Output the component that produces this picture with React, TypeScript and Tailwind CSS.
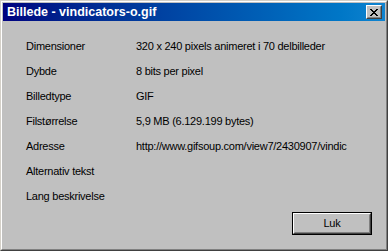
import React from "react";

const rows: [string, string][] = [
  ["Dimensioner", "320 x 240 pixels animeret i 70 delbilleder"],
  ["Dybde", "8 bits per pixel"],
  ["Billedtype", "GIF"],
  ["Filstørrelse", "5,9 MB (6.129.199 bytes)"],
  ["Adresse", "http://www.gifsoup.com/view7/2430907/vindic"],
  ["Alternativ tekst", ""],
  ["Lang beskrivelse", ""],
];

function CloseGlyph() {
  const px: [number, number][] = [];
  const pattern = [
    "XX....XX",
    ".XX..XX.",
    "..XXXX..",
    "...XX...",
    "..XXXX..",
    ".XX..XX.",
    "XX....XX",
  ];
  pattern.forEach((r, y) =>
    r.split("").forEach((c, x) => {
      if (c === "X") px.push([x, y]);
    })
  );
  return (
    <svg width="8" height="7" viewBox="0 0 8 7" shapeRendering="crispEdges">
      {px.map(([x, y]) => (
        <rect key={`${x}-${y}`} x={x} y={y} width="1" height="1" fill="#000" />
      ))}
    </svg>
  );
}

export default function App() {
  return (
    <div
      className="w-[388px] h-[251px] border border-t-[#d4d0c8] border-l-[#d4d0c8] border-b-[#404040] border-r-[#404040] bg-[#c0c0c0]"
      style={{ fontFamily: '"Liberation Sans", Arial, sans-serif' }}
    >
      <div className="w-full h-full border border-t-white border-l-white border-b-[#808080] border-r-[#808080] p-px flex flex-col">
        <div className="h-[18px] flex items-center justify-between bg-gradient-to-r from-[#000080] to-[#1084d0]">
          <span className="pl-[4px] text-white font-bold text-[12.5px] leading-none">
            Billede - vindicators-o.gif
          </span>
          <div className="mr-[3px] w-[16px] h-[14px] bg-[#c0c0c0] border border-t-white border-l-white border-b-[#404040] border-r-[#404040]">
            <div className="w-full h-full border border-t-[#c0c0c0] border-l-[#c0c0c0] border-b-[#808080] border-r-[#808080] flex items-center justify-center">
              <CloseGlyph />
            </div>
          </div>
        </div>
        <div className="flex-1 flex flex-col pt-[13px] text-[11px] tracking-[-0.25px] text-black">
          {rows.map(([label, value]) => (
            <div key={label} className="h-[25px] flex items-center pl-[23px]">
              <span className="w-[110px] shrink-0 whitespace-nowrap">{label}</span>
              <span className="whitespace-nowrap">{value}</span>
            </div>
          ))}
          <div className="flex justify-end pr-[13px] mt-[3px]">
            <div className="w-[80px] h-[23px] border border-black">
              <div className="w-full h-full border border-t-white border-l-white border-b-[#404040] border-r-[#404040]">
                <div className="w-full h-full border border-t-[#c0c0c0] border-l-[#c0c0c0] border-b-[#808080] border-r-[#808080] flex items-center justify-center text-[11px]">
                  Luk
                </div>
              </div>
            </div>
          </div>
        </div>
      </div>
    </div>
  );
}
